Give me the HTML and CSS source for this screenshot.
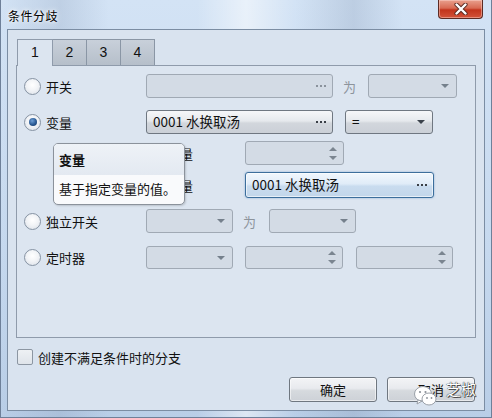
FILE: index.html
```html
<!DOCTYPE html>
<html lang="zh">
<head>
<meta charset="utf-8">
<title>条件分歧</title>
<link rel="stylesheet" href="styles.css">
</head>
<body>
<div class="window">
  <div class="titlebar">
    <span class="title">条件分歧</span>
    <div class="close">
      <svg width="16" height="12" viewBox="0 0 16 12"><path d="M3.5 1.5 L12.5 10.5 M12.5 1.5 L3.5 10.5" stroke="#5a2a22" stroke-width="4.2" stroke-linecap="round"/><path d="M3.5 1.5 L12.5 10.5 M12.5 1.5 L3.5 10.5" stroke="#ffffff" stroke-width="2.4" stroke-linecap="round"/></svg>
    </div>
  </div>
  <div class="client">
    <div class="tabs">
      <div class="tab active">1</div>
      <div class="tab">2</div>
      <div class="tab">3</div>
      <div class="tab">4</div>
    </div>
    <div class="panel">
      <div class="row r1">
        <div class="opt"><span class="radio"></span><span>开关</span></div>
        <div class="field disabled w186"><span class="txt"></span><span class="dots"><i></i><i></i><i></i></span></div>
        <span class="wei">为</span>
        <div class="combo disabled w88"><span class="txt"></span><span class="arrow"></span></div>
      </div>
      <div class="row r2">
        <div class="opt"><span class="radio on"></span><span>变量</span></div>
        <div class="field w186"><span class="txt">0001 水换取汤</span><span class="dots"><i></i><i></i><i></i></span></div>
        <div class="combo w87"><span class="txt">=</span><span class="arrow dark"></span></div>
      </div>
      <div class="row r3">
        <div class="opt"></div>
        <div class="subopt"><span class="radio on"></span><span>常量</span></div>
        <div class="spin disabled w98"><span class="txt"></span><span class="spinbtn"><i class="up"></i><i class="down"></i></span></div>
      </div>
      <div class="row r4">
        <div class="opt"></div>
        <div class="subopt"><span class="radio"></span><span>变量</span></div>
        <div class="field focus w188"><span class="txt">0001 水换取汤</span><span class="dots"><i></i><i></i><i></i></span></div>
      </div>
      <div class="row r5">
        <div class="opt"><span class="radio"></span><span>独立开关</span></div>
        <div class="combo disabled w86"><span class="txt"></span><span class="arrow"></span></div>
        <span class="wei w5">为</span>
        <div class="combo disabled w86"><span class="txt"></span><span class="arrow"></span></div>
      </div>
      <div class="row r6">
        <div class="opt"><span class="radio"></span><span>定时器</span></div>
        <div class="combo disabled w86"><span class="txt"></span><span class="arrow"></span></div>
        <div class="spin disabled w97 gap13"><span class="txt"></span><span class="spinbtn"><i class="up"></i><i class="down"></i></span></div>
        <div class="spin disabled w96 gap14"><span class="txt"></span><span class="spinbtn"><i class="up"></i><i class="down"></i></span></div>
      </div>

      <div class="tooltip">
        <div class="tip-head">变量</div>
        <div class="tip-body">基于指定变量的值。</div>
      </div>
    </div>

    <div class="check"><span class="box"></span><span>创建不满足条件时的分支</span></div>

    <div class="buttons">
      <div class="btn">确定</div>
      <div class="btn cancel">取消
        <span class="wm">
          <svg width="26" height="24" viewBox="0 0 26 24"><ellipse cx="10" cy="10" rx="8.5" ry="7.5" fill="#fff" stroke="#9aa0a8" stroke-width="1"/><path d="M5 16 L4 20 L9 17 Z" fill="#fff" stroke="#9aa0a8" stroke-width="1"/><ellipse cx="16" cy="15" rx="7" ry="6" fill="#fff" stroke="#9aa0a8" stroke-width="1"/><circle cx="7" cy="8" r="1.1" fill="#8a9098"/><circle cx="12.5" cy="8" r="1.1" fill="#8a9098"/><circle cx="14" cy="14" r="0.9" fill="#8a9098"/><circle cx="18.5" cy="14" r="0.9" fill="#8a9098"/></svg>
        </span>
        <span class="wm-text">芝椒</span>
      </div>
    </div>
  </div>
</div>
</body>
</html>
```

FILE: styles.css
```css
* { box-sizing: border-box; }
html, body { margin: 0; padding: 0; }
body {
  width: 492px;
  height: 418px;
  overflow: hidden;
  font-family: "Noto Sans CJK SC", "Noto Sans", sans-serif;
  font-size: 13px;
  color: #111;
  background: #c4d7ee;
}

.window {
  width: 492px;
  height: 418px;
  display: flex;
  flex-direction: column;
  padding: 0 6px 6px 6px;
  background:
    linear-gradient(90deg, rgba(255,255,255,0) 0, rgba(120,140,170,0.22) 12%, rgba(255,255,255,0) 22%, rgba(255,255,255,0) 40%, rgba(255,255,255,0.5) 50%, rgba(255,255,255,0) 60%, rgba(110,130,160,0.22) 72%, rgba(255,255,255,0) 82%),
    linear-gradient(180deg, #d3e3f5 0, #c6d9ef 60%, #b9cee7 100%);
  border-left: 1px solid #6e8099;
  border-right: 1px solid #6e8099;
  border-bottom: 1px solid #6e8099;
}

.titlebar {
  height: 29px;
  flex: none;
  display: flex;
  align-items: flex-start;
  justify-content: space-between;
}
.title {
  margin-top: 7px;
  margin-left: 1px;
  font-size: 12px;
  letter-spacing: 0.5px;
  color: #000;
  text-shadow: 0 0 6px #fff, 0 0 3px #fff;
}
.close {
  width: 45px;
  height: 19px;
  margin-right: 2px;
  border: 1px solid #5c2b24;
  border-top: none;
  border-radius: 0 0 4px 4px;
  background: linear-gradient(180deg, #e9a08d 0, #d86a52 45%, #c2341c 55%, #d2533a 100%);
  box-shadow: inset 0 0 0 1px rgba(255,220,210,0.45);
  display: flex;
  align-items: center;
  justify-content: center;
}

.client {
  flex: 1;
  border: 1px solid #7b8da3;
  background: #d9e3ef;
  display: flex;
  flex-direction: column;
}

.tabs {
  display: flex;
  margin: 9px 0 0 9px;
  height: 26px;
  position: relative;
  z-index: 2;
}
.tab {
  width: 35px;
  height: 26px;
  border: 1px solid #8a96a5;
  border-bottom: none;
  margin-left: -1px;
  background: linear-gradient(180deg, #c8d0da 0, #b6bfca 100%);
  display: flex;
  align-items: center;
  justify-content: center;
  font-family: "Liberation Sans", Arial, sans-serif;
  font-size: 14px;
  color: #111;
  padding-bottom: 1px;
}
.tab:first-child { margin-left: 0; }
.tab.active {
  width: 36px;
  height: 27px;
  background: #dce5f0;
  border-color: #8f9bab;
  padding-bottom: 2px;
  z-index: 2;
}

.panel {
  position: relative;
  margin-left: 8px;
  width: 460px;
  height: 273px;
  border: 1px solid #8f9bab;
  background: #dce5f0;
  padding: 8px 0 0 7px;
}

.row {
  display: flex;
  align-items: center;
  height: 24px;
}
.r2 { margin-top: 12px; }
.r3 { margin-top: 7px; }
.r4 { margin-top: 7px; height: 26px; }
.r5 { margin-top: 11px; }
.r6 { margin-top: 13px; height: 23px; }

.opt {
  width: 122px;
  flex: none;
  display: flex;
  align-items: center;
  gap: 5px;
}
.subopt {
  width: 99px;
  flex: none;
  display: flex;
  align-items: center;
  gap: 4px;
}

.radio {
  width: 17px;
  height: 17px;
  border-radius: 50%;
  border: 1px solid #8693a3;
  background: radial-gradient(circle at 50% 40%, #ffffff 0, #f2f4f7 45%, #d8dee6 100%);
  flex: none;
  position: relative;
}
.radio.on::after {
  content: "";
  position: absolute;
  left: 3.5px;
  top: 3.5px;
  width: 8px;
  height: 8px;
  border-radius: 50%;
  background: radial-gradient(circle at 40% 35%, #6f9fd6 0, #2a5a94 55%, #14325c 100%);
}

.field, .combo, .spin {
  height: 100%;
  flex: none;
  display: flex;
  align-items: center;
  border-radius: 3px;
  border: 1px solid #6f7781;
  background: linear-gradient(180deg, #f6f7f9 0, #e6e9ed 45%, #d2d6dc 55%, #cbd0d7 100%);
  padding: 0 0 0 6px;
}
.field .txt, .combo .txt, .spin .txt {
  flex: 1;
  white-space: nowrap;
  font-size: 13.5px;
  line-height: 1;
}
.disabled {
  border-color: #a0a9b4;
  background: #d3dbe5;
}
.focus {
  border-color: #3c6e9c;
  background: linear-gradient(180deg, #f1f7fd 0, #e0ecf8 45%, #c9dcef 55%, #c2d6ea 100%);
  box-shadow: inset 0 0 0 1px rgba(255,255,255,0.6), 0 0 2px rgba(70,130,190,0.6);
}

.dots {
  display: flex;
  gap: 2px;
  margin-right: 6px;
  align-items: center;
}
.dots i {
  display: block;
  width: 2px;
  height: 2px;
  background: #3a3f46;
}
.disabled .dots i { background: #8a929c; }

.arrow {
  width: 0;
  height: 0;
  border-left: 4px solid transparent;
  border-right: 4px solid transparent;
  border-top: 4px solid #75808c;
  margin-right: 7px;
}
.arrow.dark { border-top-color: #3b424b; }

.spinbtn {
  width: 12px;
  margin-right: 4px;
  display: flex;
  flex-direction: column;
  align-items: center;
  gap: 5px;
}
.spinbtn i { display: block; width: 0; height: 0; border-left: 4px solid transparent; border-right: 4px solid transparent; }
.spinbtn .up { border-bottom: 4px solid #7b8590; }
.spinbtn .down { border-top: 4px solid #7b8590; }

.w186 { width: 187px; }
.w188 { width: 189px; }
.w88 { width: 89px; }
.w87 { width: 88px; margin-left: 12px; }
.w86 { width: 87px; }
.w98 { width: 99px; }
.w97 { width: 98px; }
.w96 { width: 97px; }
.gap13 { margin-left: 12px; }
.gap14 { margin-left: 13px; }

.wei {
  width: 14px;
  margin: 0 11px 0 10px;
  color: #8d949c;
  font-size: 13px;
  flex: none;
}
.wei.w5 { margin: 0 12px 0 10px; }

.tooltip {
  position: absolute;
  left: 36px;
  top: 77px;
  width: 132px;
  height: 62px;
  border: 1px solid #8b929b;
  border-radius: 5px;
  background: #f9fafc;
  overflow: hidden;
  box-shadow: 1px 1px 2px rgba(0,0,0,0.15);
  z-index: 3;
}
.tip-head {
  height: 31px;
  padding: 6px 0 0 5px;
  background: linear-gradient(180deg, #eef2f7 0, #e3e9f1 100%);
  font-weight: bold;
  font-size: 13px;
}
.tip-body {
  padding: 4px 0 0 5px;
  font-size: 13px;
}

.check {
  display: flex;
  align-items: center;
  gap: 5px;
  margin: 11px 0 0 9px;
  height: 16px;
}
.box {
  width: 16px;
  height: 16px;
  border: 1px solid #8c96a2;
  border-radius: 2px;
  background: linear-gradient(180deg, #eef1f4 0, #dfe4ea 100%);
}

.buttons {
  display: flex;
  justify-content: flex-end;
  gap: 10px;
  margin: 12px 9px 0 0;
}
.btn {
  width: 88px;
  height: 25px;
  border: 1px solid #6f7780;
  border-radius: 3px;
  background: linear-gradient(180deg, #f3f4f6 0, #e8eaee 45%, #d6dade 55%, #cdd1d7 100%);
  box-shadow: inset 0 0 0 1px rgba(255,255,255,0.55);
  display: flex;
  align-items: center;
  justify-content: center;
  position: relative;
}
.wm {
  position: absolute;
  left: 25px;
  top: 6px;
  display: block;
  width: 26px;
  height: 24px;
}
.wm-text {
  position: absolute;
  left: 58px;
  top: 1px;
  white-space: nowrap;
  font-size: 15px;
  line-height: 20px;
  color: #fff;
  text-shadow: 0 0 1px #333, 0 0 1px #333, 1px 1px 0 #555;
}
```
